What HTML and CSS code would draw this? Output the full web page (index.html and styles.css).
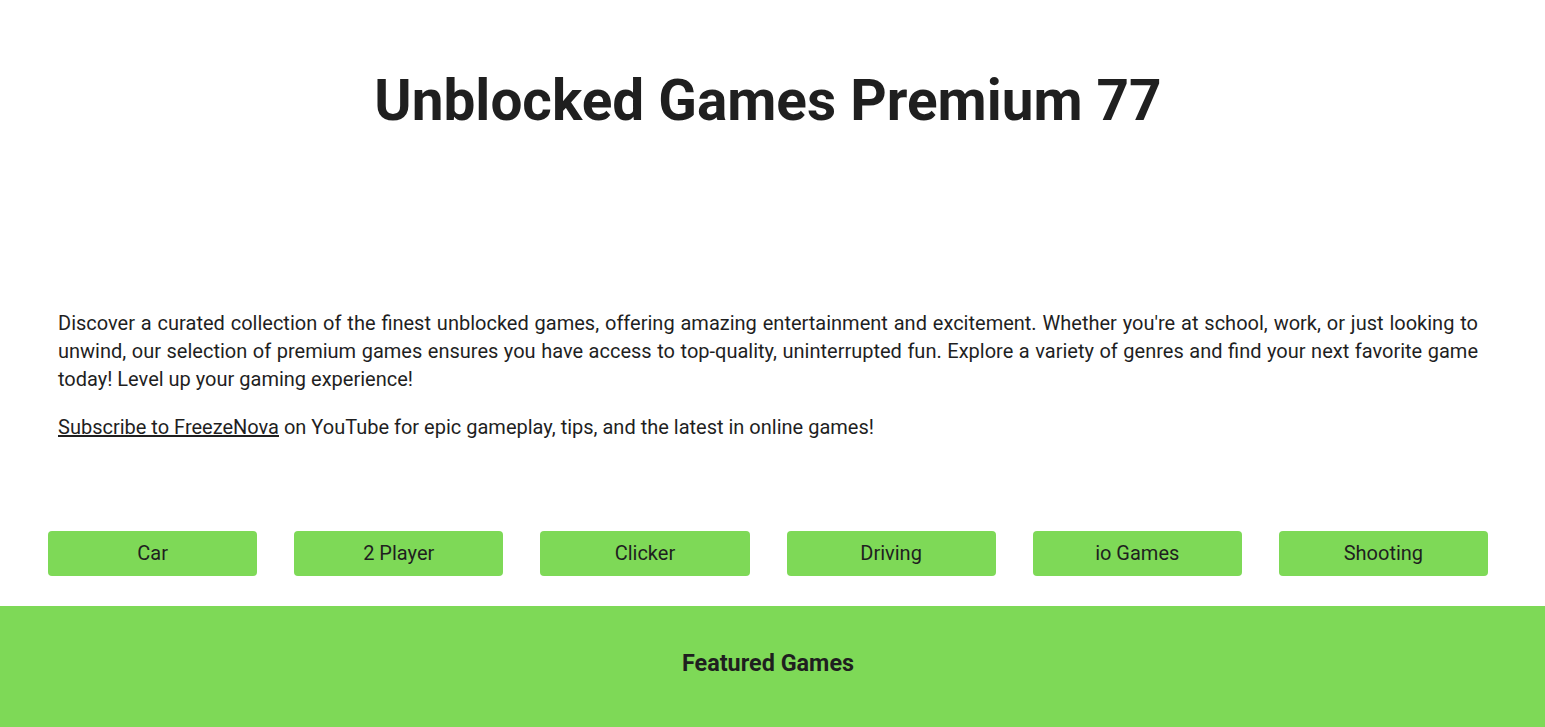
FILE: index.html
```html
<!DOCTYPE html>
<html lang="en">
<head>
<meta charset="utf-8">
<title>Unblocked Games Premium 77</title>
<link rel="stylesheet" href="styles.css">
</head>
<body>
<div class="page">
  <header class="site-header">
    <h1 class="site-title">Unblocked Games Premium 77</h1>
  </header>
  <div class="ad-space"></div>
  <section class="intro">
    <p>Discover a curated collection of the finest unblocked games, offering amazing entertainment and excitement. Whether you're at school, work, or just looking to unwind, our selection of premium games ensures you have access to top-quality, uninterrupted fun. Explore a variety of genres and find your next favorite game today! Level up your gaming experience!</p>
    <p><a href="#" class="link">Subscribe to FreezeNova</a> on YouTube for epic gameplay, tips, and the latest in online games!</p>
  </section>
  <nav class="categories">
    <a href="#" class="cat-btn">Car</a>
    <a href="#" class="cat-btn">2 Player</a>
    <a href="#" class="cat-btn">Clicker</a>
    <a href="#" class="cat-btn">Driving</a>
    <a href="#" class="cat-btn">io Games</a>
    <a href="#" class="cat-btn">Shooting</a>
  </nav>
</div>
<section class="featured">
  <h2 class="featured-title">Featured Games</h2>
</section>
</body>
</html>
```
FILE: styles.css
```css
html, body {
  margin: 0;
  padding: 0;
  background: #ffffff;
}
body {
  font-family: Roboto, "Liberation Sans", Arial, sans-serif;
  color: #1f1f1f;
}
.page {
  padding: 0 57px 0 48px;
}
.site-header {
  padding-top: 66px;
  text-align: center;
}
.site-title {
  margin: 0;
  font-size: 56.7px;
  line-height: 70px;
  font-weight: 700;
  color: #1f1f1f;
}
.ad-space {
  height: 173px;
}
.intro {
  padding: 0 10px;
}
.intro p {
  margin: 0 0 20px 0;
  font-size: 20px;
  line-height: 28px;
  text-align: justify;
}
.link {
  color: #1f1f1f;
  text-decoration: underline;
}
.categories {
  display: grid;
  grid-template-columns: repeat(6, 1fr);
  column-gap: 37px;
  margin-top: 90px;
  margin-bottom: 30px;
}
.cat-btn {
  display: flex;
  align-items: center;
  justify-content: center;
  box-sizing: border-box;
  height: 45px;
  padding-bottom: 2px;
  background: #7ed957;
  border-radius: 4px;
  color: #1f1f1f;
  text-decoration: none;
  font-size: 20px;
}
.featured {
  background: #7ed957;
  padding: 42px 9px 200px 0;
  text-align: center;
}
.featured-title {
  margin: 0;
  font-size: 23.4px;
  line-height: 30px;
  font-weight: 700;
  color: #1f1f1f;
}
```
